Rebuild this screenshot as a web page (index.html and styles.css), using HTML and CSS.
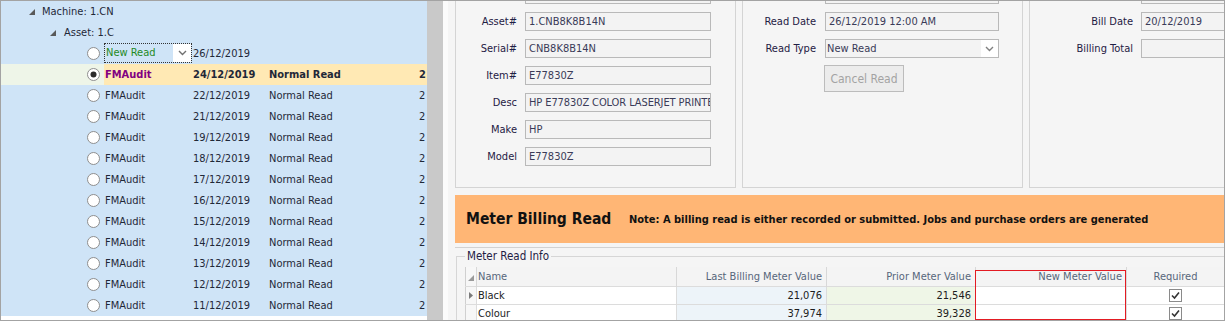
FILE: index.html
```html
<!DOCTYPE html>
<html>
<head>
<meta charset="utf-8">
<link rel="stylesheet" href="styles.css">
</head>
<body>
<div class="frame">
  <div class="tree">
    <div class="node l0"><span class="exp"><svg width="6" height="6" viewBox="0 0 6 6"><polygon points="6,0 6,6 0,6" fill="#595959"/></svg></span>Machine: 1.CN</div>
    <div class="node l1"><span class="exp"><svg width="6" height="6" viewBox="0 0 6 6"><polygon points="6,0 6,6 0,6" fill="#595959"/></svg></span>Asset: 1.C</div>

    <div class="trow">
      <div class="rc"><svg class="radio" width="13" height="13" viewBox="0 0 13 13"><circle cx="6.5" cy="6.5" r="6" fill="#fff" stroke="#8e8e8e"/></svg></div>
      <div class="cell"><div class="editor"><span class="ed-text">New Read</span><span class="ed-btn"><svg width="9" height="6" viewBox="0 0 9 6"><polyline points="1,1 4.5,4.5 8,1" fill="none" stroke="#707070" stroke-width="1.4"/></svg></span></div></div>
      <div class="cell">26/12/2019</div>
      <div class="cell"></div>
      <div class="cell"></div>
    </div>

    <div class="trow sel">
      <div class="rc"><svg class="radio" width="13" height="13" viewBox="0 0 13 13"><circle cx="6.5" cy="6.5" r="6" fill="#fff" stroke="#8e8e8e"/><circle cx="6.5" cy="6.5" r="3" fill="#2b2b2b"/></svg></div>
      <div class="cell name">FMAudit</div>
      <div class="cell">24/12/2019</div>
      <div class="cell">Normal Read</div>
      <div class="cell">2</div>
    </div>

    <div class="trow"><div class="rc"><svg class="radio" width="13" height="13" viewBox="0 0 13 13"><circle cx="6.5" cy="6.5" r="6" fill="#fff" stroke="#8e8e8e"/></svg></div><div class="cell">FMAudit</div><div class="cell">22/12/2019</div><div class="cell">Normal Read</div><div class="cell">2</div></div>
    <div class="trow"><div class="rc"><svg class="radio" width="13" height="13" viewBox="0 0 13 13"><circle cx="6.5" cy="6.5" r="6" fill="#fff" stroke="#8e8e8e"/></svg></div><div class="cell">FMAudit</div><div class="cell">21/12/2019</div><div class="cell">Normal Read</div><div class="cell">2</div></div>
    <div class="trow"><div class="rc"><svg class="radio" width="13" height="13" viewBox="0 0 13 13"><circle cx="6.5" cy="6.5" r="6" fill="#fff" stroke="#8e8e8e"/></svg></div><div class="cell">FMAudit</div><div class="cell">19/12/2019</div><div class="cell">Normal Read</div><div class="cell">2</div></div>
    <div class="trow"><div class="rc"><svg class="radio" width="13" height="13" viewBox="0 0 13 13"><circle cx="6.5" cy="6.5" r="6" fill="#fff" stroke="#8e8e8e"/></svg></div><div class="cell">FMAudit</div><div class="cell">18/12/2019</div><div class="cell">Normal Read</div><div class="cell">2</div></div>
    <div class="trow"><div class="rc"><svg class="radio" width="13" height="13" viewBox="0 0 13 13"><circle cx="6.5" cy="6.5" r="6" fill="#fff" stroke="#8e8e8e"/></svg></div><div class="cell">FMAudit</div><div class="cell">17/12/2019</div><div class="cell">Normal Read</div><div class="cell">2</div></div>
    <div class="trow"><div class="rc"><svg class="radio" width="13" height="13" viewBox="0 0 13 13"><circle cx="6.5" cy="6.5" r="6" fill="#fff" stroke="#8e8e8e"/></svg></div><div class="cell">FMAudit</div><div class="cell">16/12/2019</div><div class="cell">Normal Read</div><div class="cell">2</div></div>
    <div class="trow"><div class="rc"><svg class="radio" width="13" height="13" viewBox="0 0 13 13"><circle cx="6.5" cy="6.5" r="6" fill="#fff" stroke="#8e8e8e"/></svg></div><div class="cell">FMAudit</div><div class="cell">15/12/2019</div><div class="cell">Normal Read</div><div class="cell">2</div></div>
    <div class="trow"><div class="rc"><svg class="radio" width="13" height="13" viewBox="0 0 13 13"><circle cx="6.5" cy="6.5" r="6" fill="#fff" stroke="#8e8e8e"/></svg></div><div class="cell">FMAudit</div><div class="cell">14/12/2019</div><div class="cell">Normal Read</div><div class="cell">2</div></div>
    <div class="trow"><div class="rc"><svg class="radio" width="13" height="13" viewBox="0 0 13 13"><circle cx="6.5" cy="6.5" r="6" fill="#fff" stroke="#8e8e8e"/></svg></div><div class="cell">FMAudit</div><div class="cell">13/12/2019</div><div class="cell">Normal Read</div><div class="cell">2</div></div>
    <div class="trow"><div class="rc"><svg class="radio" width="13" height="13" viewBox="0 0 13 13"><circle cx="6.5" cy="6.5" r="6" fill="#fff" stroke="#8e8e8e"/></svg></div><div class="cell">FMAudit</div><div class="cell">12/12/2019</div><div class="cell">Normal Read</div><div class="cell">2</div></div>
    <div class="trow"><div class="rc"><svg class="radio" width="13" height="13" viewBox="0 0 13 13"><circle cx="6.5" cy="6.5" r="6" fill="#fff" stroke="#8e8e8e"/></svg></div><div class="cell">FMAudit</div><div class="cell">11/12/2019</div><div class="cell">Normal Read</div><div class="cell">2</div></div>
  </div>

  <div class="splitter"></div>
  <div class="gutter"></div>

  <div class="main">
    <div class="top">
      <div class="panel p1">
        <div class="fields">
          <div class="frow"><label class="lbl"></label><div class="inp"></div></div>
          <div class="frow"><label class="lbl">Asset#</label><div class="inp">1.CNB8K8B14N</div></div>
          <div class="frow"><label class="lbl">Serial#</label><div class="inp">CNB8K8B14N</div></div>
          <div class="frow"><label class="lbl">Item#</label><div class="inp">E77830Z</div></div>
          <div class="frow"><label class="lbl">Desc</label><div class="inp desc">HP E77830Z COLOR LASERJET PRINTER</div></div>
          <div class="frow"><label class="lbl">Make</label><div class="inp">HP</div></div>
          <div class="frow"><label class="lbl">Model</label><div class="inp">E77830Z</div></div>
        </div>
      </div>
      <div class="panel p2">
        <div class="fields">
          <div class="frow"><label class="lbl"></label><div class="inp"></div></div>
          <div class="frow"><label class="lbl">Read Date</label><div class="inp">26/12/2019 12:00 AM</div></div>
          <div class="frow"><label class="lbl">Read Type</label><div class="inp combo"><span class="combo-text">New Read</span><span class="combo-btn"><svg width="9" height="6" viewBox="0 0 9 6"><polyline points="1,1 4.5,4.5 8,1" fill="none" stroke="#808080" stroke-width="1.4"/></svg></span></div></div>
          <div class="brow"><div class="btn">Cancel Read</div></div>
        </div>
      </div>
      <div class="panel p3">
        <div class="fields">
          <div class="frow"><label class="lbl"></label><div class="inp"></div></div>
          <div class="frow"><label class="lbl">Bill Date</label><div class="inp">20/12/2019</div></div>
          <div class="frow"><label class="lbl">Billing Total</label><div class="inp"></div></div>
        </div>
      </div>
    </div>

    <div class="banner">
      <div class="btitle">Meter Billing Read</div>
      <div class="bnote">Note: A billing read is either recorded or submitted. Jobs and purchase orders are generated</div>
    </div>

    <div class="info">
      <fieldset class="group">
        <legend class="legend">Meter Read Info</legend>
        <div class="gridwrap">
          <table class="grid">
            <colgroup>
              <col class="c-ind"><col class="c-name"><col class="c-last"><col class="c-prior"><col class="c-new"><col>
            </colgroup>
            <thead>
              <tr>
                <th class="ind"><svg width="6" height="6" viewBox="0 0 6 6"><polygon points="6,0 6,6 0,6" fill="#9a9a9a"/></svg></th>
                <th class="left">Name</th>
                <th>Last Billing Meter Value</th>
                <th>Prior Meter Value</th>
                <th>New Meter Value</th>
                <th class="center">Required</th>
              </tr>
            </thead>
            <tbody>
              <tr>
                <td class="ind"><svg width="4" height="7" viewBox="0 0 4 7"><polygon points="0,0 4,3.5 0,7" fill="#7a7a7a"/></svg></td>
                <td class="left">Black</td>
                <td class="last">21,076</td>
                <td class="prior">21,546</td>
                <td></td>
                <td class="center"><svg class="chk" width="13" height="13" viewBox="0 0 13 13"><rect x="0.5" y="0.5" width="12" height="12" fill="#fff" stroke="#8a8a8a"/><polyline points="3,6.5 5.5,9 10,3.5" fill="none" stroke="#333" stroke-width="1.6"/></svg></td>
              </tr>
              <tr>
                <td class="ind"></td>
                <td class="left">Colour</td>
                <td class="last">37,974</td>
                <td class="prior">39,328</td>
                <td></td>
                <td class="center"><svg class="chk" width="13" height="13" viewBox="0 0 13 13"><rect x="0.5" y="0.5" width="12" height="12" fill="#fff" stroke="#8a8a8a"/><polyline points="3,6.5 5.5,9 10,3.5" fill="none" stroke="#333" stroke-width="1.6"/></svg></td>
              </tr>
            </tbody>
          </table>
          <div class="redbox"></div>
        </div>
      </fieldset>
    </div>
  </div>
</div>
</body>
</html>
```

FILE: styles.css
```css
body {
  margin: 0;
  background: #ffffff;
  font-family: "DejaVu Sans Condensed", "DejaVu Sans", sans-serif;
  font-size: 11px;
}

.frame {
  width: 1225px;
  height: 321px;
  box-sizing: border-box;
  border: 1px solid #a3a3a3;
  display: flex;
  overflow: hidden;
  background: #ffffff;
}

/* ---------- tree ---------- */
.tree {
  width: 426px;
  flex: none;
  background: #ffffff;
  color: #1f2838;
}

.node {
  height: 21px;
  display: flex;
  align-items: center;
  background: #cfe4f7;
  white-space: nowrap;
}
.node.l0 { padding-left: 28px; }
.node.l1 { padding-left: 49px; }
.exp {
  width: 14px;
  display: flex;
  align-items: center;
}
.node.l0 .exp { width: 13px; }

.trow {
  height: 21px;
  display: grid;
  grid-template-columns: 103px 88px 76px 150px 1fr;
  align-items: center;
  background: #cfe4f7;
  white-space: nowrap;
  overflow: hidden;
}
.rc {
  height: 21px;
  display: flex;
  align-items: center;
  padding-left: 86px;
  box-sizing: border-box;
}
.radio { display: block; }
.cell {
  padding-left: 1px;
  overflow: hidden;
  height: 21px;
  line-height: 21px;
}

.trow.sel { background: #ffe9b4; font-weight: bold; }
.trow.sel .rc { background: #eef5e8; }
.trow.sel .name { color: #820082; }

.editor {
  height: 20px;
  box-sizing: border-box;
  border: 1px dotted #333333;
  display: flex;
  align-items: center;
  justify-content: space-between;
  margin-left: -1px;
}
.ed-text {
  color: #1f8a1f;
  padding-left: 1px;
  line-height: 18px;
}
.ed-btn {
  width: 18px;
  height: 18px;
  background: #ffffff;
  display: flex;
  align-items: center;
  justify-content: center;
}

/* ---------- splitter ---------- */
.splitter {
  width: 16px;
  flex: none;
  background: #c9c9c9;
}
.gutter {
  width: 5px;
  flex: none;
  background: #fbfbfb;
}

/* ---------- main ---------- */
.main {
  flex: 1;
  min-width: 0;
  background: #f5f5f5;
  padding-left: 7px;
  overflow: hidden;
  color: #1f2044;
}

.top {
  display: flex;
  gap: 6px;
  height: 187px;
  overflow: hidden;
}
.panel {
  flex: none;
  height: 187px;
  box-sizing: border-box;
  border: 1px solid #d4d4d4;
  border-top: none;
  overflow: hidden;
}
.p1 { width: 281px; }
.p2 { width: 281px; }
.p3 { width: 260px; }

.fields {
  margin-top: -16px;
  display: flex;
  flex-direction: column;
  gap: 8px;
}
.frow {
  display: flex;
  align-items: center;
  height: 19px;
}
.lbl {
  text-align: right;
  flex: none;
  white-space: nowrap;
}
.p1 .lbl { width: 61px; margin-right: 8px; }
.p2 .lbl { width: 73px; margin-right: 9px; }
.p3 .lbl { width: 103px; margin-right: 8px; }

.inp {
  height: 19px;
  box-sizing: border-box;
  border: 1px solid #b9b9b9;
  background: #f3f3f3;
  color: #3a3b58;
  padding-left: 3px;
  line-height: 17px;
  white-space: nowrap;
  overflow: hidden;
  flex: none;
}
.inp.desc { letter-spacing: -0.1px; }
.p1 .inp { width: 186px; }
.p2 .inp { width: 174px; }
.p3 .inp { width: 140px; }

.combo {
  display: flex;
  justify-content: space-between;
  padding-left: 1px;
}
.combo-btn {
  width: 17px;
  height: 17px;
  background: #ffffff;
  display: flex;
  align-items: center;
  justify-content: center;
}

.brow {
  padding-left: 81px;
  margin-top: -1px;
}
.btn {
  width: 80px;
  height: 27px;
  box-sizing: border-box;
  border: 1px solid #bcbcbc;
  background: #ececec;
  color: #a3a3a3;
  font-size: 12px;
  display: flex;
  align-items: center;
  justify-content: center;
}

/* ---------- banner ---------- */
.banner {
  margin-top: 7px;
  height: 48px;
  background: #ffb675;
  display: flex;
  align-items: center;
  padding-left: 11px;
  color: #111111;
  white-space: nowrap;
}
.btitle {
  width: 163px;
  flex: none;
  font-size: 15.5px;
  font-weight: bold;
}
.bnote {
  font-weight: bold;
  font-size: 11px;
}

/* ---------- info ---------- */
.info {
  margin-top: 4px;
  border-top: 1px solid #d2d2d2;
  padding-top: 1px;
}
.group {
  margin: 0 0 0 1px;
  padding: 4px 0 0 8px;
  border: 1px solid #d6d6d6;
  border-right: none;
  border-bottom: none;
  min-width: 0;
}
.legend {
  padding: 0 2px;
  line-height: 14px;
  color: #1f2044;
  font-size: 11.5px;
}

.gridwrap {
  position: relative;
}
.grid {
  width: 100%;
  border-collapse: collapse;
  table-layout: fixed;
  border-left: 1px solid #d0d0d0;
}
.c-ind { width: 11px; }
.c-name { width: 200px; }
.c-last { width: 150px; }
.c-prior { width: 149px; }
.c-new { width: 151px; }

.grid th {
  height: 19px;
  padding: 0 4px 0 0;
  font-weight: normal;
  color: #57667b;
  text-align: right;
  background: #f4f4f4;
  border-left: 1px solid #d8d8d8;
  white-space: nowrap;
  overflow: hidden;
}
.grid td {
  height: 17px;
  padding: 0 4px 0 0;
  text-align: right;
  color: #1d1d1d;
  background: #ffffff;
  border-top: 1px solid #dcdcdc;
  border-left: 1px solid #dcdcdc;
  white-space: nowrap;
  overflow: hidden;
}
.grid .left { text-align: left; padding-left: 1px; }
.grid .center { text-align: center; padding: 0; }
.grid th.ind, .grid td.ind {
  padding: 0;
  text-align: center;
  background: #f7f7f7;
  border-left: none;
}
.grid th.ind svg { position: relative; top: 1px; }
.grid td.last { background: #edf4f9; }
.grid td.prior { background: #eff6e7; }
.chk { display: inline-block; vertical-align: middle; }

.redbox {
  position: absolute;
  left: 510px;
  top: 3px;
  width: 151px;
  height: 50px;
  box-sizing: border-box;
  border: 1px solid #e31b23;
  pointer-events: none;
}
```
